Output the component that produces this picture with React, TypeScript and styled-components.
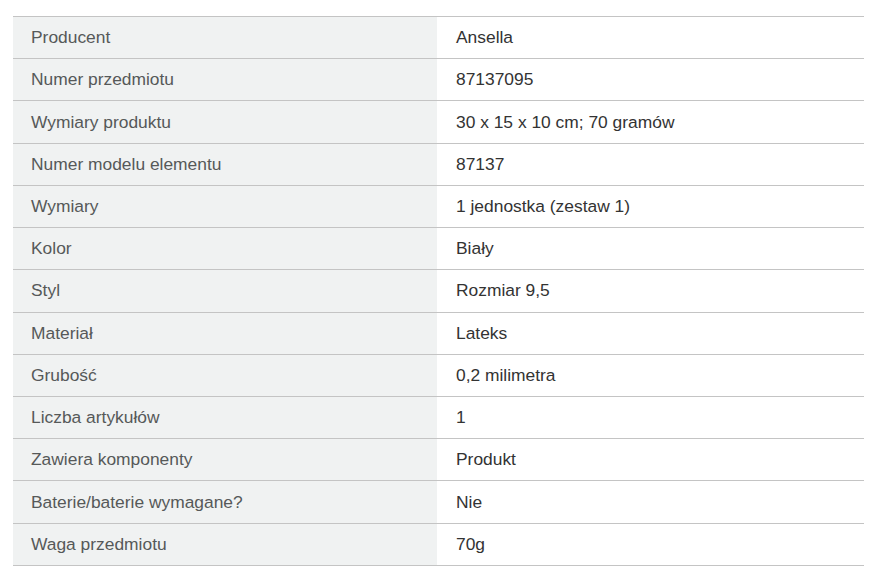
import styled, { createGlobalStyle } from 'styled-components';

const GlobalStyle = createGlobalStyle`
  body {
    margin: 0;
    background: #ffffff;
    font-family: "Liberation Sans", Arial, sans-serif;
  }
`;

const Wrapper = styled.div`
  padding: 16px 11px 0 13px;
`;

const Table = styled.table`
  width: 851px;
  border-collapse: collapse;
  table-layout: fixed;
  border-bottom: 1px solid #c4c4c4;
`;

const Row = styled.tr`
  height: 42.23px;
  border-top: 1px solid #c4c4c4;
`;

const Label = styled.th`
  box-sizing: border-box;
  width: 424px;
  padding: 0 18px;
  background: #f0f2f2;
  color: #565959;
  font-weight: normal;
  font-size: 17.4px;
  text-align: left;
  vertical-align: middle;
`;

const Value = styled.td`
  padding: 0 19px;
  background: #ffffff;
  color: #333333;
  font-size: 17.4px;
  vertical-align: middle;
`;

const rows: [string, string][] = [
  ['Producent', 'Ansella'],
  ['Numer przedmiotu', '87137095'],
  ['Wymiary produktu', '30 x 15 x 10 cm; 70 gramów'],
  ['Numer modelu elementu', '87137'],
  ['Wymiary', '1 jednostka (zestaw 1)'],
  ['Kolor', 'Biały'],
  ['Styl', 'Rozmiar 9,5'],
  ['Materiał', 'Lateks'],
  ['Grubość', '0,2 milimetra'],
  ['Liczba artykułów', '1'],
  ['Zawiera komponenty', 'Produkt'],
  ['Baterie/baterie wymagane?', 'Nie'],
  ['Waga przedmiotu', '70g'],
];

export default function App() {
  return (
    <>
      <GlobalStyle />
      <Wrapper>
        <Table>
          <tbody>
            {rows.map(([label, value]) => (
              <Row key={label}>
                <Label>{label}</Label>
                <Value>{value}</Value>
              </Row>
            ))}
          </tbody>
        </Table>
      </Wrapper>
    </>
  );
}
